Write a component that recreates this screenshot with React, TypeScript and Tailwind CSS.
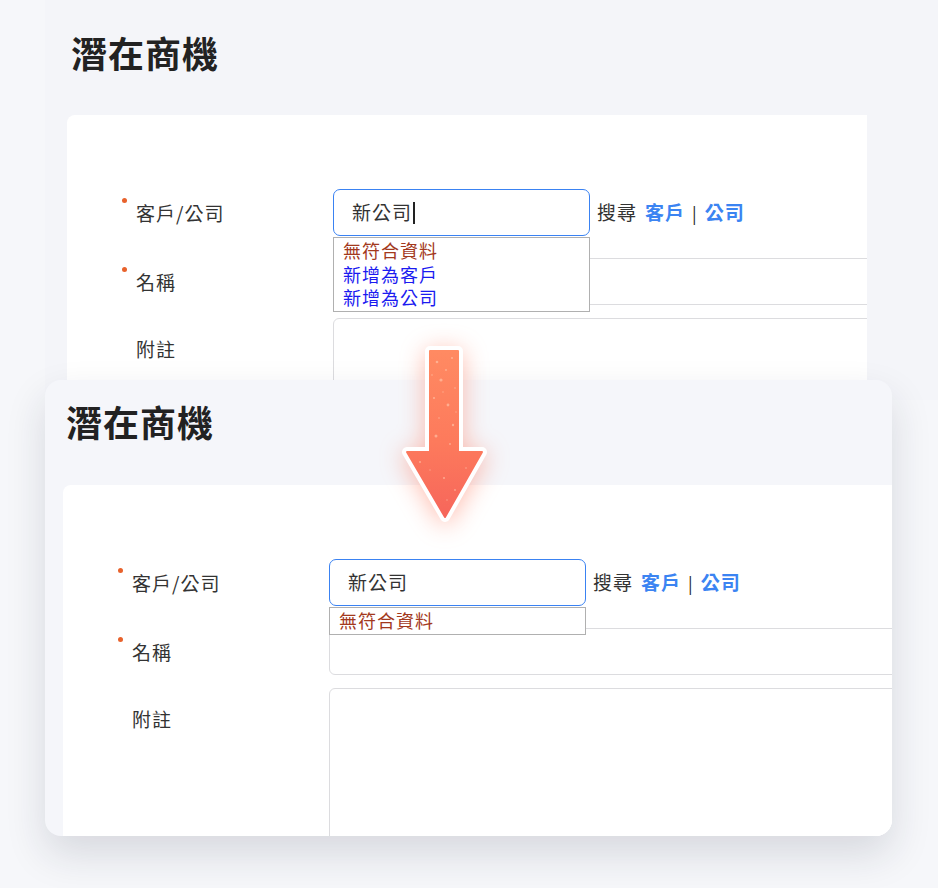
import React from "react";

const font = { fontFamily: '"Noto Sans CJK TC", "Noto Sans", sans-serif' };

type FieldLabelProps = { text: string; required?: boolean };

function FieldLabel({ text, required }: FieldLabelProps) {
  return (
    <span className="relative pl-[14px] text-[19px] leading-[28px] tracking-[1px] text-[#333]">
      {required && (
        <span className="absolute left-0 top-[-1px] h-[5px] w-[5px] rounded-full bg-[#e8622c]" />
      )}
      {text}
    </span>
  );
}

type LeadFormProps = { showAdd: boolean; showCursor: boolean };

function LeadForm({ showAdd, showCursor }: LeadFormProps) {
  return (
    <div className="relative pl-[55px] pt-[74px]">
      {/* 客戶/公司 */}
      <div className="flex items-center">
        <div className="flex w-[211px] shrink-0 items-center">
          <FieldLabel text="客戶/公司" required />
        </div>
        <div className="relative">
          <div className="flex h-[47px] w-[257px] items-center rounded-[7px] border-[1.5px] border-[#3a82f2] bg-white px-[18px] text-[19px] tracking-[1px] text-[#333]">
            新公司
            {showCursor && <span className="ml-[1px] h-[22px] w-[1.5px] bg-[#222]" />}
          </div>
          <div className="absolute left-0 top-[48px] z-10 w-[257px] border border-[#b0b0b0] bg-white px-[9px] py-[1px] text-[18px] leading-[23.5px] tracking-[1px]">
            <div className="text-[#a3391d]">無符合資料</div>
            {showAdd && (
              <>
                <div className="text-[#1b1bf0]">新增為客戶</div>
                <div className="text-[#1b1bf0]">新增為公司</div>
              </>
            )}
          </div>
        </div>
        <div className="ml-[7px] flex items-center whitespace-nowrap text-[19px] tracking-[1px] text-[#333]">
          <span>搜尋</span>
          <span className="ml-[8px] font-semibold text-[#3b84f2]">客戶</span>
          <span className="mx-[7px] text-[17px] text-[#222]">|</span>
          <span className="font-semibold text-[#3b84f2]">公司</span>
        </div>
      </div>

      {/* 名稱 */}
      <div className="mt-[22px] flex items-center">
        <div className="flex w-[211px] shrink-0 items-center">
          <FieldLabel text="名稱" required />
        </div>
        <div className="h-[47px] w-[720px] shrink-0 rounded-[6px] border border-[#dcdcdf] bg-white" />
      </div>

      {/* 附註 */}
      <div className="mt-[13px] flex items-start">
        <div className="flex w-[211px] shrink-0 pt-[17px]">
          <FieldLabel text="附註" />
        </div>
        <div className="h-[300px] w-[720px] shrink-0 rounded-[6px] border border-[#dcdcdf] bg-white" />
      </div>
    </div>
  );
}

function Arrow() {
  const dots = [
    [437, 362, 1.3], [446, 370, 0.9], [452, 358, 1], [441, 380, 1.6], [455, 388, 0.8],
    [434, 398, 1.1], [448, 405, 1.4], [439, 418, 0.8], [453, 425, 1.2], [436, 436, 1.5],
    [450, 444, 0.9], [443, 392, 0.7], [432, 375, 0.8], [456, 412, 0.7], [420, 462, 1],
    [466, 468, 0.8], [444, 478, 1.1], [430, 470, 0.7], [455, 490, 0.9], [447, 500, 0.7],
  ];
  return (
    <svg
      className="absolute left-[390px] top-[335px] h-[200px] w-[110px] drop-shadow-[0_4px_12px_rgba(255,110,80,0.45)]"
      viewBox="390 335 110 200"
    >
      <defs>
        <linearGradient id="arrowFill" x1="0" y1="0" x2="0" y2="1">
          <stop offset="0" stopColor="#ff8a62" />
          <stop offset="0.55" stopColor="#fd7a5c" />
          <stop offset="1" stopColor="#f6665b" />
        </linearGradient>
      </defs>
      <path
        d="M430 351 H458 V452 H482 L445 517 L407 452 H430 Z"
        fill="#fff"
        stroke="#fff"
        strokeWidth="10"
        strokeLinejoin="round"
      />
      <path
        d="M430 351 H458 V452 H482 L445 517 L407 452 H430 Z"
        fill="url(#arrowFill)"
        stroke="url(#arrowFill)"
        strokeWidth="2"
        strokeLinejoin="round"
      />
      {dots.map(([cx, cy, r], i) => (
        <circle key={i} cx={cx} cy={cy} r={r} fill="#ffd2b8" opacity={0.55} />
      ))}
    </svg>
  );
}

export default function App() {
  return (
    <div className="relative h-[888px] w-[938px] overflow-hidden bg-[#f6f7fa]" style={font}>
      {/* earlier screenshot */}
      <div className="absolute left-[45px] top-0 flex h-[400px] w-[893px] flex-col bg-[#f4f5f9]">
        <h1 className="pl-[26px] pt-[31px] text-[36px] font-bold leading-[43px] tracking-[1px] text-[#222]">
          潛在商機
        </h1>
        <div className="ml-[22px] mt-[41px] h-[300px] w-[800px] overflow-hidden rounded-tl-lg bg-white">
          <LeadForm showAdd showCursor />
        </div>
      </div>

      {/* later screenshot */}
      <div className="absolute left-[45px] top-[380px] flex h-[456px] w-[847px] flex-col overflow-hidden rounded-[16px] bg-[#f5f6fa] shadow-[0_18px_40px_rgba(30,35,60,0.14)]">
        <h1 className="pl-[21px] pt-[20px] text-[36px] font-bold leading-[43px] tracking-[1px] text-[#222]">
          潛在商機
        </h1>
        <div className="ml-[18px] mt-[42px] flex-1 overflow-hidden rounded-tl-lg bg-white">
          <LeadForm showAdd={false} showCursor={false} />
        </div>
      </div>

      <Arrow />
    </div>
  );
}
